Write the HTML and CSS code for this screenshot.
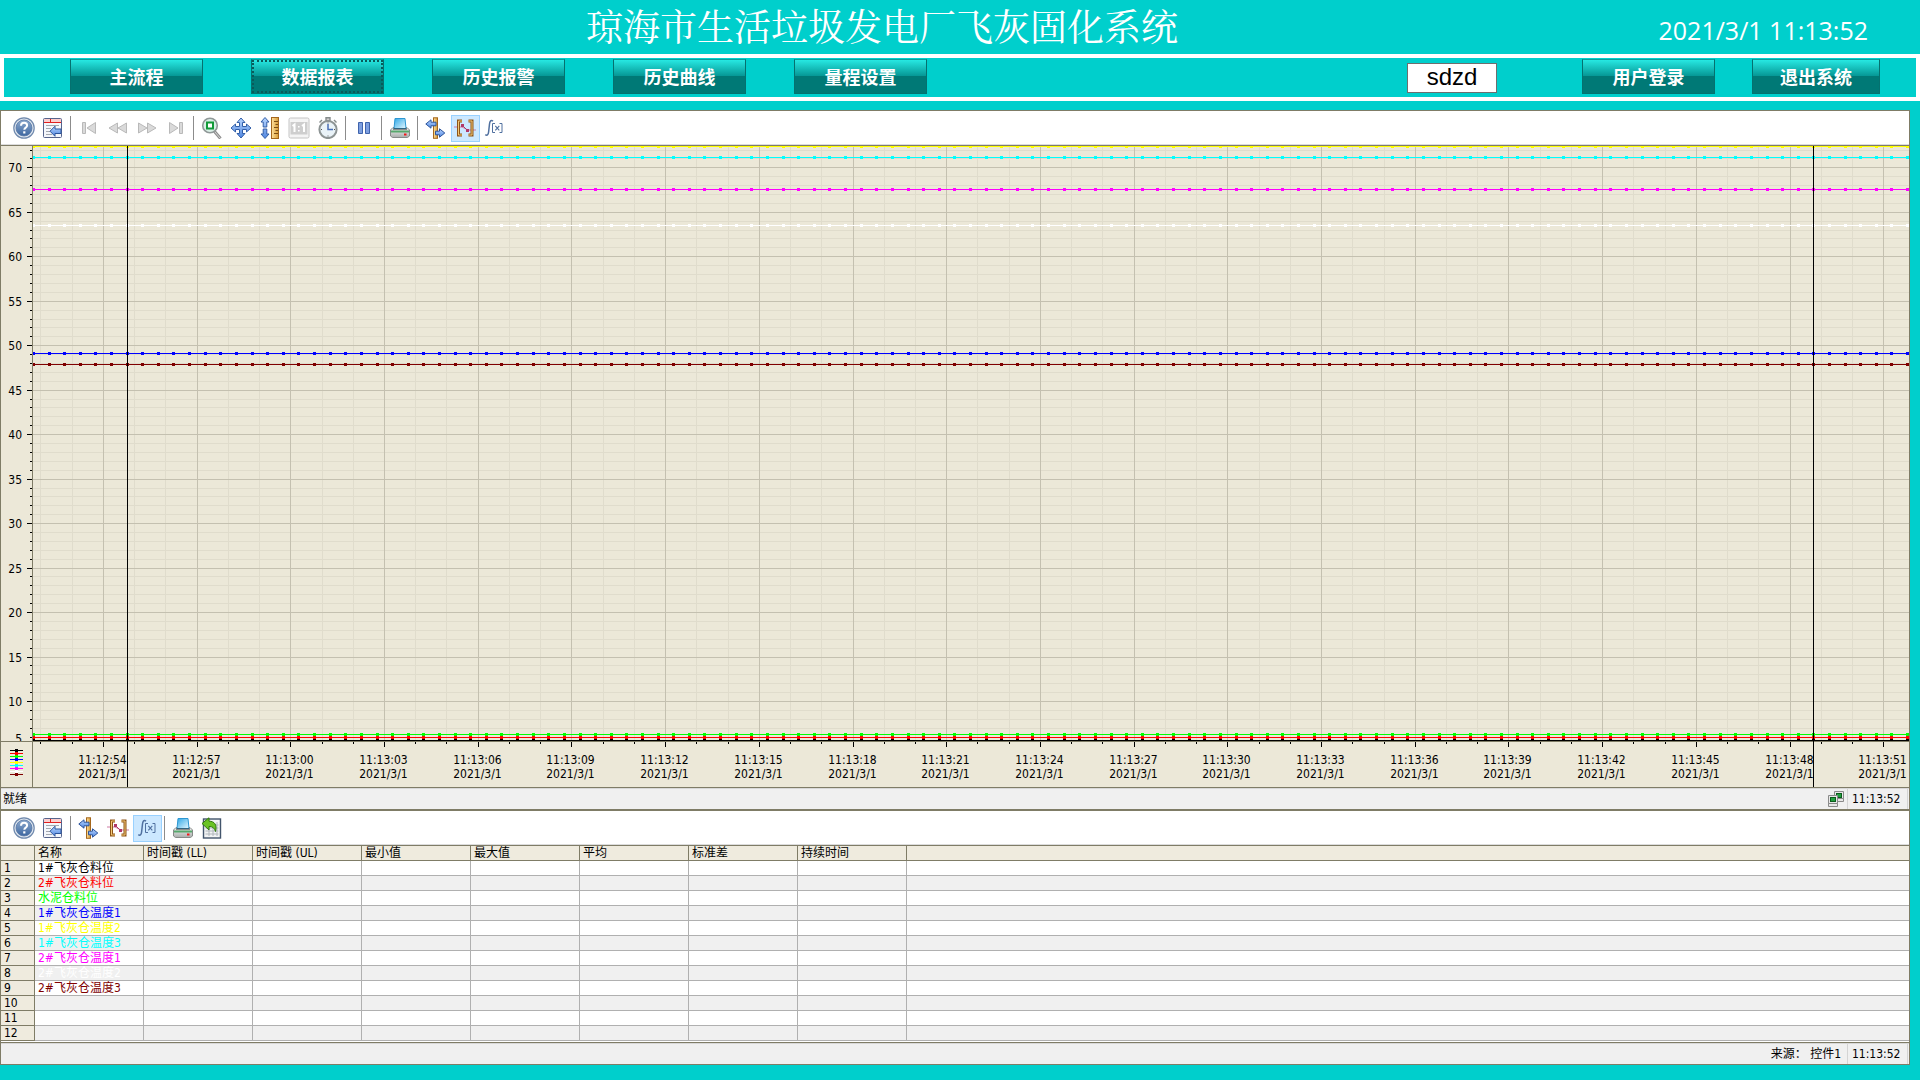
FILE: index.html
```html
<!DOCTYPE html>
<html lang="zh-CN">
<head>
  <meta charset="UTF-8" />
  <meta name="viewport" content="width=device-width, initial-scale=1.0"/>
  <title>琼海市生活垃圾发电厂飞灰固化系统</title>
  <link rel="stylesheet" href="styles.css">
</head>
<body>
  <!-- Shared toolbar icons -->
  <svg class="sprite" aria-hidden="true">
    <defs>
      <linearGradient id="g-help" x1="0" y1="0" x2="0" y2="1">
        <stop offset="0" stop-color="#8eabcf"/><stop offset="1" stop-color="#3c66a0"/>
      </linearGradient>
      <linearGradient id="g-blue" x1="0" y1="0" x2="0" y2="1">
        <stop offset="0" stop-color="#b9d6ff"/><stop offset="1" stop-color="#4f86e0"/>
      </linearGradient>
      <linearGradient id="g-gold" x1="0" y1="0" x2="1" y2="0">
        <stop offset="0" stop-color="#ffe2a0"/><stop offset="1" stop-color="#d69a35"/>
      </linearGradient>
      <linearGradient id="g-grey" x1="0" y1="0" x2="0" y2="1">
        <stop offset="0" stop-color="#f4f4f4"/><stop offset="1" stop-color="#a9adab"/>
      </linearGradient>
      <linearGradient id="g-paper" x1="0" y1="0" x2="1" y2="1">
        <stop offset="0" stop-color="#2fa8e6"/><stop offset="1" stop-color="#e6f8ff"/>
      </linearGradient>
    </defs>

    <symbol id="i-help" viewBox="0 0 22 22">
      <circle cx="11" cy="11" r="10.2" fill="#dfe6ef" stroke="#6f89ad" stroke-width="1.2"/>
      <circle cx="11" cy="11" r="8" fill="url(#g-help)" stroke="#5877a5" stroke-width=".8"/>
      <path d="M8 8.8c0-2 1.3-3 3.1-3s3 1 3 2.6c0 2.3-2.8 2.2-2.8 4.4" fill="none" stroke="#fff" stroke-width="2"/>
      <rect x="10.2" y="14.3" width="2.2" height="2.2" fill="#fff"/>
    </symbol>

    <symbol id="i-config" viewBox="0 0 22 22">
      <rect x="1.5" y="1.5" width="18" height="19" rx="1" fill="#f4f6fb" stroke="#56648c"/>
      <path d="M2 2h17v3.500H2z" fill="#fbd0d0"/>
      <path d="M2 5.500h17M8.500 2v3.500" stroke="#e02020"/>
      <path d="M4 8.500h13M4 11.500h5M4 14.500h4M4 17.500h6" stroke="#a4a8ae"/>
      <path d="M8 14.200l5-5v2.800h6v4.500h-6v2.800z" fill="url(#g-blue)" stroke="#2c549c"/>
    </symbol>

    <symbol id="i-first" viewBox="0 0 22 22">
      <path d="M4.500 5.500h3v11h-3zM17.500 5.500v11L9 11z" fill="#dadada" stroke="#b9b9b9"/>
    </symbol>
    <symbol id="i-rewind" viewBox="0 0 22 22">
      <path d="M10.500 6v10L2 11zM19.500 6v10L11 11z" fill="#dadada" stroke="#b9b9b9"/>
    </symbol>
    <symbol id="i-forward" viewBox="0 0 22 22">
      <path d="M2.500 6v10l8.500-5zM11.500 6v10l8.500-5z" fill="#dadada" stroke="#b9b9b9"/>
    </symbol>
    <symbol id="i-last" viewBox="0 0 22 22">
      <path d="M14.500 5.500h3v11h-3zM4.500 5.500v11L13 11z" fill="#dadada" stroke="#b9b9b9"/>
    </symbol>

    <symbol id="i-zoom" viewBox="0 0 22 22">
      <path d="M13.500 14.500l6 7" stroke="#8c8c8c" stroke-width="3"/>
      <path d="M13.500 14.500l6 7" stroke="#d8d8d8"/>
      <circle cx="9" cy="8.500" r="7.300" fill="#d9efe6" stroke="#909898" stroke-width="1.600"/>
      <rect x="6" y="5.500" width="6" height="6" fill="#fff" stroke="#119a38" stroke-width="2"/>
    </symbol>

    <symbol id="i-move" viewBox="0 0 22 22">
      <path d="M11 1l4 4.500h-2.500v4h4V7l4.500 4-4.500 4v-2.500h-4v4H15L11 21l-4-4.500h2.500v-4h-4V15L1 11l4.500-4v2.500h4v-4H7z" fill="url(#g-blue)" stroke="#325fa8"/>
    </symbol>

    <symbol id="i-axis" viewBox="0 0 22 22">
      <path d="M6 .5l4 4.500H7.800v5H4.200V5H2zM6 21.500L2 17h2.200v-5h3.600v5H10z" fill="url(#g-blue)" stroke="#325fa8"/>
      <rect x="12.500" y=".5" width="7" height="21" fill="url(#g-gold)" stroke="#a4661c"/>
      <path d="M15 4.500h4M16.500 7.500h2.500M15 10.500h4M16.500 13.500h2.500M15 16.500h4" stroke="#7c4c14"/>
    </symbol>

    <symbol id="i-original" viewBox="0 0 22 22">
      <rect x="1" y="1" width="20" height="20" rx="1.500" fill="#f4f4f4" stroke="#c4c4c4"/>
      <rect x="2.500" y="5" width="17" height="12.500" fill="#cecece"/>
      <path d="M4.500 9l2-1.500V15M14 9l2-1.500V15" fill="none" stroke="#fff" stroke-width="2"/>
      <path d="M10 9h1.600v1.600H10zM10 13h1.600v1.600H10z" fill="#fff"/>
    </symbol>

    <symbol id="i-clock" viewBox="0 0 22 22">
      <path d="M9 .8h4v3H9zM17 3l2.500 2.500M5 3L2.500 5.500" fill="#d0d0d0" stroke="#858b8b" stroke-width="1.400"/>
      <circle cx="11" cy="12.500" r="8.600" fill="#eaf3f8" stroke="#8d9494" stroke-width="2"/>
      <path d="M11 7v5.500h5" fill="none" stroke="#4a6fb5" stroke-width="1.500"/>
      <path d="M11 5.500v1M11 18.500v1M4 12.500h1M17 12.500h1" stroke="#555"/>
    </symbol>

    <symbol id="i-pause" viewBox="0 0 22 22">
      <path d="M5.500 5.500h4v11h-4zM12.500 5.500h4v11h-4z" fill="#7d9fe0" stroke="#3f63ac"/>
    </symbol>

    <symbol id="i-print" viewBox="0 0 22 22">
      <path d="M4 10.500L1.500 13v6l2 1.500h15l2-1.500v-6L18 10.500z" fill="url(#g-grey)" stroke="#868a88"/>
      <path d="M6 1.500h10l1 10H5z" fill="url(#g-paper)" stroke="#2d97d2"/>
      <path d="M2 13.500h18v2H2z" fill="#56a86c"/>
      <path d="M4 12h14" stroke="#333"/>
      <rect x="15" y="16.500" width="2.500" height="2" fill="#f01818"/>
    </symbol>

    <symbol id="i-ruler" viewBox="0 0 22 22">
      <rect x="8.500" y=".8" width="4" height="20.500" fill="url(#g-gold)" stroke="#a4661c"/>
      <path d="M.8 7L6 2.800v2.400h5v3.600H6v2.400z" fill="url(#g-blue)" stroke="#2c549c"/>
      <path d="M19.800 16l-5.300-4.200v2.400h-4v3.600h4v2.400z" fill="url(#g-blue)" stroke="#2c549c"/>
    </symbol>

    <symbol id="i-range" viewBox="0 0 22 22">
      <path d="M0 10h8l6 3h8" fill="none" stroke="#cf7ba4"/>
      <path d="M8 4H4.500v14H8" fill="none" stroke="#8e5518" stroke-width="3"/>
      <path d="M8 4H4.500v14H8" fill="none" stroke="#f2c775"/>
      <path d="M14.500 4H18v14h-3.500" fill="none" stroke="#8e5518" stroke-width="3"/>
      <path d="M14.500 4H18v14h-3.500" fill="none" stroke="#f2c775"/>
      <path d="M8 8l6 6" stroke="#b03868"/>
      <path d="M7 7h3v3H7zM12 12h3v3h-3z" fill="#b03868"/>
    </symbol>

    <symbol id="i-stats" viewBox="0 0 22 22">
      <path d="M10 4.200C8 2.600 6.800 4 6.500 7l-.9 8c-.3 3-1.600 4-3.300 2.600" fill="none" stroke="#50709f" stroke-width="1.500"/>
      <path d="M12 6.500H9.500v9H12M16.500 6.500H19v9h-2.500" fill="none" stroke="#50709f"/>
      <path d="M12.300 8.800l4 4.500M16.300 8.800l-4 4.500" stroke="#50709f" stroke-width="1.100"/>
    </symbol>

    <symbol id="i-export" viewBox="0 0 22 22">
      <rect x="2.500" y="2" width="17" height="19" fill="#f2f3f4" stroke="#43556c" stroke-width="1.400"/>
      <path d="M4.500 8h13M4.500 11h13M4.500 14h13M4.500 17h13M8 5v14M12 5v14M16 5v14" stroke="#b0b6bc"/>
      <path d="M1 6.500L8 .8v3.400c5.500 0 8.200 3.500 6.500 10.300C13.500 11 11.500 9.300 8 9.500V13z" fill="#6bc324" stroke="#317a0b"/>
    </symbol>

    <symbol id="i-online" viewBox="0 0 16 16">
      <path d="M6.500.5h9v7h-9zM6.500 7.500h9v3h-9z" fill="#e8e8e8" stroke="#8a8a8a"/>
      <rect x="8.500" y="2.500" width="5" height="4" fill="#22a040" stroke="#0c5c1c"/>
      <path d="M.5 4.500h9v8h-9zM.5 12.500h9v3h-9z" fill="#e8e8e8" stroke="#8a8a8a"/>
      <rect x="2.500" y="6.500" width="5" height="4" fill="#22a040" stroke="#0c5c1c"/>
    </symbol>
  </svg>

  <header class="header">
    <h1>琼海市生活垃圾发电厂飞灰固化系统</h1>
    <time>2021/3/1 11:13:52</time>
  </header>

  <nav class="nav">
    <div class="nav-group">
      <button type="button">主流程</button>
      <button type="button" class="focused">数据报表</button>
      <button type="button">历史报警</button>
      <button type="button">历史曲线</button>
      <button type="button">量程设置</button>
    </div>
    <input class="user" type="text" value="sdzd" aria-label="当前用户">
    <div class="nav-group nav-right">
      <button type="button">用户登录</button>
      <button type="button" class="exit">退出系统</button>
    </div>
  </nav>

  <main class="panel">
    <div class="toolbar">
      <button type="button" aria-label="帮助"><svg><use href="#i-help"/></svg></button>
      <button type="button" aria-label="组态"><svg><use href="#i-config"/></svg></button>
      <span class="sep"></span>
      <button type="button" disabled aria-label="第一条"><svg><use href="#i-first"/></svg></button>
      <button type="button" disabled aria-label="上一条"><svg><use href="#i-rewind"/></svg></button>
      <button type="button" disabled aria-label="下一条"><svg><use href="#i-forward"/></svg></button>
      <button type="button" disabled aria-label="最后一条"><svg><use href="#i-last"/></svg></button>
      <span class="sep"></span>
      <button type="button" aria-label="缩放"><svg><use href="#i-zoom"/></svg></button>
      <button type="button" aria-label="移动"><svg><use href="#i-move"/></svg></button>
      <button type="button" aria-label="移动坐标轴"><svg><use href="#i-axis"/></svg></button>
      <button type="button" disabled aria-label="原始视图"><svg><use href="#i-original"/></svg></button>
      <button type="button" aria-label="时间范围"><svg><use href="#i-clock"/></svg></button>
      <span class="sep"></span>
      <button type="button" aria-label="暂停"><svg><use href="#i-pause"/></svg></button>
      <span class="sep"></span>
      <button type="button" aria-label="打印"><svg><use href="#i-print"/></svg></button>
      <span class="sep"></span>
      <button type="button" aria-label="标尺"><svg><use href="#i-ruler"/></svg></button>
      <button type="button" class="active" aria-label="统计范围"><svg><use href="#i-range"/></svg></button>
      <button type="button" aria-label="计算统计"><svg><use href="#i-stats"/></svg></button>
    </div>

    <div class="chart"><svg id="trend"></svg></div>

    <div class="status">
      <span class="status-text">就绪</span>
      <svg class="online"><use href="#i-online"/></svg>
      <span class="status-time">11:13:52</span>
    </div>

    <div class="toolbar toolbar-table">
      <button type="button" aria-label="帮助"><svg><use href="#i-help"/></svg></button>
      <button type="button" aria-label="组态"><svg><use href="#i-config"/></svg></button>
      <span class="sep"></span>
      <button type="button" aria-label="标尺"><svg><use href="#i-ruler"/></svg></button>
      <button type="button" aria-label="统计范围"><svg><use href="#i-range"/></svg></button>
      <button type="button" class="active" aria-label="统计"><svg><use href="#i-stats"/></svg></button>
      <span class="sep"></span>
      <button type="button" aria-label="打印"><svg><use href="#i-print"/></svg></button>
      <button type="button" aria-label="导出"><svg><use href="#i-export"/></svg></button>
    </div>

    <table class="stats">
      <colgroup>
        <col class="col-index">
        <col class="col-data" span="8">
        <col>
      </colgroup>
      <thead>
        <tr><th></th><th>名称</th><th>时间戳 (LL)</th><th>时间戳 (UL)</th><th>最小值</th><th>最大值</th><th>平均</th><th>标准差</th><th>持续时间</th><th></th></tr>
      </thead>
      <tbody>
        <tr><th>1</th><td class="black">1#飞灰仓料位</td><td></td><td></td><td></td><td></td><td></td><td></td><td></td><td></td></tr>
        <tr><th>2</th><td class="red">2#飞灰仓料位</td><td></td><td></td><td></td><td></td><td></td><td></td><td></td><td></td></tr>
        <tr><th>3</th><td class="lime">水泥仓料位</td><td></td><td></td><td></td><td></td><td></td><td></td><td></td><td></td></tr>
        <tr><th>4</th><td class="blue">1#飞灰仓温度1</td><td></td><td></td><td></td><td></td><td></td><td></td><td></td><td></td></tr>
        <tr><th>5</th><td class="yellow">1#飞灰仓温度2</td><td></td><td></td><td></td><td></td><td></td><td></td><td></td><td></td></tr>
        <tr><th>6</th><td class="cyan">1#飞灰仓温度3</td><td></td><td></td><td></td><td></td><td></td><td></td><td></td><td></td></tr>
        <tr><th>7</th><td class="magenta">2#飞灰仓温度1</td><td></td><td></td><td></td><td></td><td></td><td></td><td></td><td></td></tr>
        <tr><th>8</th><td class="white">2#飞灰仓温度2</td><td></td><td></td><td></td><td></td><td></td><td></td><td></td><td></td></tr>
        <tr><th>9</th><td class="maroon">2#飞灰仓温度3</td><td></td><td></td><td></td><td></td><td></td><td></td><td></td><td></td></tr>
        <tr><th>10</th><td></td><td></td><td></td><td></td><td></td><td></td><td></td><td></td><td></td></tr>
        <tr><th>11</th><td></td><td></td><td></td><td></td><td></td><td></td><td></td><td></td><td></td></tr>
        <tr><th>12</th><td></td><td></td><td></td><td></td><td></td><td></td><td></td><td></td><td></td></tr>
      </tbody>
    </table>

    <div class="status status-table">
      <span class="status-source">来源： 控件1</span>
      <span class="status-time">11:13:52</span>
    </div>
  </main>

  <script src="script.js"></script>
</body>
</html>
```

FILE: styles.css
```css
* {
  box-sizing: border-box;
}

body {
  margin: 0;
  min-height: 100vh;
  display: flex;
  flex-direction: column;
  background: #00cfcc;
  font-family: "DejaVu Sans Condensed", "DejaVu Sans", "Noto Sans CJK SC", sans-serif;
  font-size: 12px;
  line-height: 14px;
  color: #000;
}

button,
input {
  margin: 0;
  padding: 0;
  font: inherit;
}

.sprite {
  position: absolute;
  width: 0;
  height: 0;
}

/* Header */
.header {
  display: flex;
  justify-content: space-between;
  height: 54px;
  padding: 0 52px 0 586px;
  color: #fff;
  white-space: nowrap;
}

.header h1 {
  margin: 0;
  font-family: "Noto Serif CJK SC", "Noto Sans CJK SC", sans-serif;
  font-size: 37px;
  font-weight: 400;
  line-height: 50px;
}

.header time {
  font-family: "Open Sans", sans-serif;
  font-size: 25px;
  line-height: 60px;
}

/* Navigation */
.nav {
  display: flex;
  align-items: flex-start;
  height: 47px;
  padding: 1px 36px 0 66px;
  border: 4px solid #fff;
}

.nav-group {
  display: flex;
  gap: 48px;
}

.nav-right {
  gap: 37px;
}

.nav button {
  width: 133px;
  height: 35px;
  padding-bottom: 2px;
  border: 1px solid #05716f;
  border-top-color: #0d9a98;
  background: linear-gradient(to bottom, #27e8e2 0, #069896 48%, #007976 48%, #007976 100%);
  color: #fff;
  font-family: "Noto Sans CJK SC", sans-serif;
  font-size: 18px;
  font-weight: bold;
}

.nav button.focused {
  outline: 2px dotted #0a5a5a;
  outline-offset: -3px;
}

.nav button.exit {
  width: 128px;
}

.user {
  width: 90px;
  height: 30px;
  margin: 4px 85px 0 auto;
  padding-bottom: 2px;
  border: 1px solid #6e6e6e;
  background: #fff;
  font-family: "Liberation Sans", Arial, sans-serif;
  font-size: 24px;
  text-align: center;
}

/* Panel */
.panel {
  flex: 1;
  display: flex;
  flex-direction: column;
  margin: 9px 10px 15px 0;
  border: 1px solid #7f7c66;
  background: #fff;
}

.toolbar {
  display: flex;
  align-items: center;
  height: 35px;
  padding-left: 9px;
  border-bottom: 1px solid #7f7c66;
  box-shadow: inset 0 -1px #dcdcdc;
}

.toolbar button {
  display: flex;
  align-items: center;
  justify-content: center;
  width: 29px;
  height: 27px;
  padding-right: 2px;
  border: 1px solid transparent;
  background: none;
}

.toolbar button.active {
  border-color: #99d1ff;
  background: #cce8ff;
}

.toolbar svg {
  flex: none;
  width: 22px;
  height: 22px;
}

.sep {
  width: 7px;
  height: 24px;
  margin: 0 -2px 0 2px;
  border-left: 1px solid #8c8c8c;
}

.chart {
  flex: 1;
  display: flex;
  min-height: 300px;
  background: #ece8d8;
}

.chart svg {
  flex: 1;
  min-width: 0;
}

.chart text {
  font-size: 12px;
}

.grid-minor {
  stroke: #e0dccc;
}

.grid-major {
  stroke: #c4c0b0;
}

.frame {
  stroke: #7f7c66;
}

.tick,
.cursor {
  stroke: #000;
}

/* Status bars */
.status {
  display: flex;
  align-items: center;
  height: 22px;
  padding: 0 1px 0 2px;
  border-top: 1px solid #7f7c66;
  box-shadow: inset 0 1px #d8d8d8;
  background: #f0f0f0;
  line-height: 20px;
}

.status-text {
  margin-right: auto;
}

.online {
  width: 16px;
  height: 16px;
  margin-right: 3px;
}

.status-time {
  width: 61px;
  padding-left: 4px;
  border-left: 1px solid #d4d4d4;
  border-right: 1px solid #d4d4d4;
}

.status-source {
  margin-left: auto;
  margin-right: 6px;
}

.toolbar-table {
  height: 37px;
  border-top: 2px solid #7f7c66;
}

/* Statistics table */
.stats {
  width: 100%;
  table-layout: fixed;
  border-spacing: 0;
  margin-bottom: 1px;
}

.col-index {
  width: 34px;
}

.col-data {
  width: 109px;
}

.stats th,
.stats td {
  height: 15px;
  padding: 1px 3px 0;
  border-right: 1px solid #b0b0b0;
  border-bottom: 1px solid #b0b0b0;
  font-weight: normal;
  text-align: left;
  line-height: 13px;
  white-space: nowrap;
  overflow: hidden;
}

.stats th {
  background: #efebde;
  border-color: #7f7c66;
}

.stats th:last-child,
.stats td:last-child {
  border-right: 0;
}

.stats tbody tr:nth-child(even) td {
  background: #f0f0f0;
}

.black { color: #000; }
.red { color: #f00; }
.lime { color: #0f0; }
.blue { color: #00f; }
.yellow { color: #ff0; }
.cyan { color: #0ff; }
.magenta { color: #f0f; }
.white { color: #fff; }
.maroon { color: #800000; }
```

FILE: script.js
```js
const NS = "http://www.w3.org/2000/svg";
const svg = document.getElementById("trend");

const AXIS_LEFT = 31;
const AXIS_HEIGHT = 46;
const V_MAX = 72.4;
const V_MIN = 5.5;
const SECONDS = 60.06;
const FIRST_LABEL = 2.27; // seconds from the left edge to 11:12:54
const FIRST_SAMPLE = 0.03;

const series = [
  { color: "#000000", value: 5.6 },
  { color: "#ff0000", value: 5.95 },
  { color: "#00ff00", value: 6.3 },
  { color: "#0000ff", value: 49.1 },
  { color: "#ffff00", value: 72.4 },
  { color: "#00ffff", value: 71.15 },
  { color: "#ff00ff", value: 67.55 },
  { color: "#ffffff", value: 63.5 },
  { color: "#800000", value: 47.9 }
];

function add(name, attrs, text) {
  const el = document.createElementNS(NS, name);
  for (const key in attrs) el.setAttribute(key, attrs[key]);
  if (text) el.textContent = text;
  svg.appendChild(el);
}

function line(x1, y1, x2, y2, cls) {
  add("path", { d: `M${x1} ${y1}L${x2} ${y2}`, class: cls });
}

function timeLabel(offset) {
  const s = 12 * 60 + 54 + offset;
  const pad = n => String(n).padStart(2, "0");
  return `11:${pad(Math.floor(s / 60))}:${pad(s % 60)}`;
}

function drawTrend() {
  svg.innerHTML = "";
  const width = svg.clientWidth;
  const height = svg.clientHeight;
  const bottom = height - AXIS_HEIGHT;
  const perSecond = (width - AXIS_LEFT - 1) / SECONDS;
  const y = v => Math.round((V_MAX - v) / (V_MAX - V_MIN) * bottom) + 0.5;
  const x = s => Math.round(AXIS_LEFT + 1 + s * perSecond) - 0.5;

  // minor grid first so the major lines stay on top
  for (let v = 6; v <= 72; v++) {
    if (v % 5) line(AXIS_LEFT, y(v), width, y(v), "grid-minor");
    line(AXIS_LEFT - 2, y(v), AXIS_LEFT, y(v), "tick");
  }
  for (let s = -2; s <= 57; s++) {
    const px = x(FIRST_LABEL + s);
    if (s % 3) line(px, 0, px, bottom, "grid-minor");
    line(px, bottom + 1, px, bottom + (s % 3 ? 3 : 6), "tick");
  }
  for (let v = 10; v <= 70; v += 5) {
    line(AXIS_LEFT, y(v), width, y(v), "grid-major");
    line(AXIS_LEFT - 5, y(v), AXIS_LEFT, y(v), "tick");
    add("text", { x: 21, y: y(v) + 4, "text-anchor": "end" }, String(v));
  }

  // the lowest value sits half under the time axis
  add("text", { x: 21, y: bottom + 2, "text-anchor": "end" }, "5");
  add("rect", { x: 0, y: bottom, width: AXIS_LEFT, height: AXIS_HEIGHT, fill: "#ece8d8" });

  for (let s = 0; s <= 57; s += 3) {
    const px = x(FIRST_LABEL + s);
    line(px, 0, px, bottom, "grid-major");
    add("text", { x: px - 1, y: bottom + 23, "text-anchor": "middle" }, timeLabel(s));
    add("text", { x: px - 1, y: bottom + 37, "text-anchor": "middle" }, "2021/3/1");
  }

  // trends, one sample every half second
  series.forEach(item => {
    const py = y(item.value);
    let d = "";
    for (let s = FIRST_SAMPLE; s <= SECONDS; s += 0.5) d += `M${x(s) - 1.5} ${py}h3`;
    add("path", { d: `M${AXIS_LEFT + 1} ${py}H${width}`, stroke: item.color });
    add("path", { d: d, stroke: item.color, "stroke-width": 3 });
  });

  line(AXIS_LEFT + 0.5, 0, AXIS_LEFT + 0.5, height, "frame");
  line(0, bottom + 0.5, width, bottom + 0.5, "frame");

  // legend in the corner
  series.forEach((item, i) => {
    const py = bottom + 9.5 + i * 3;
    add("path", { d: `M9 ${py}h13`, stroke: item.color });
    add("path", { d: `M14 ${py}h3`, stroke: item.color, "stroke-width": 3 });
  });

  // range cursors
  [3, 57].forEach(s => {
    const px = x(s + FIRST_SAMPLE);
    line(px, 0, px, height, "cursor");
  });
}

window.addEventListener("resize", drawTrend);
drawTrend();
```
